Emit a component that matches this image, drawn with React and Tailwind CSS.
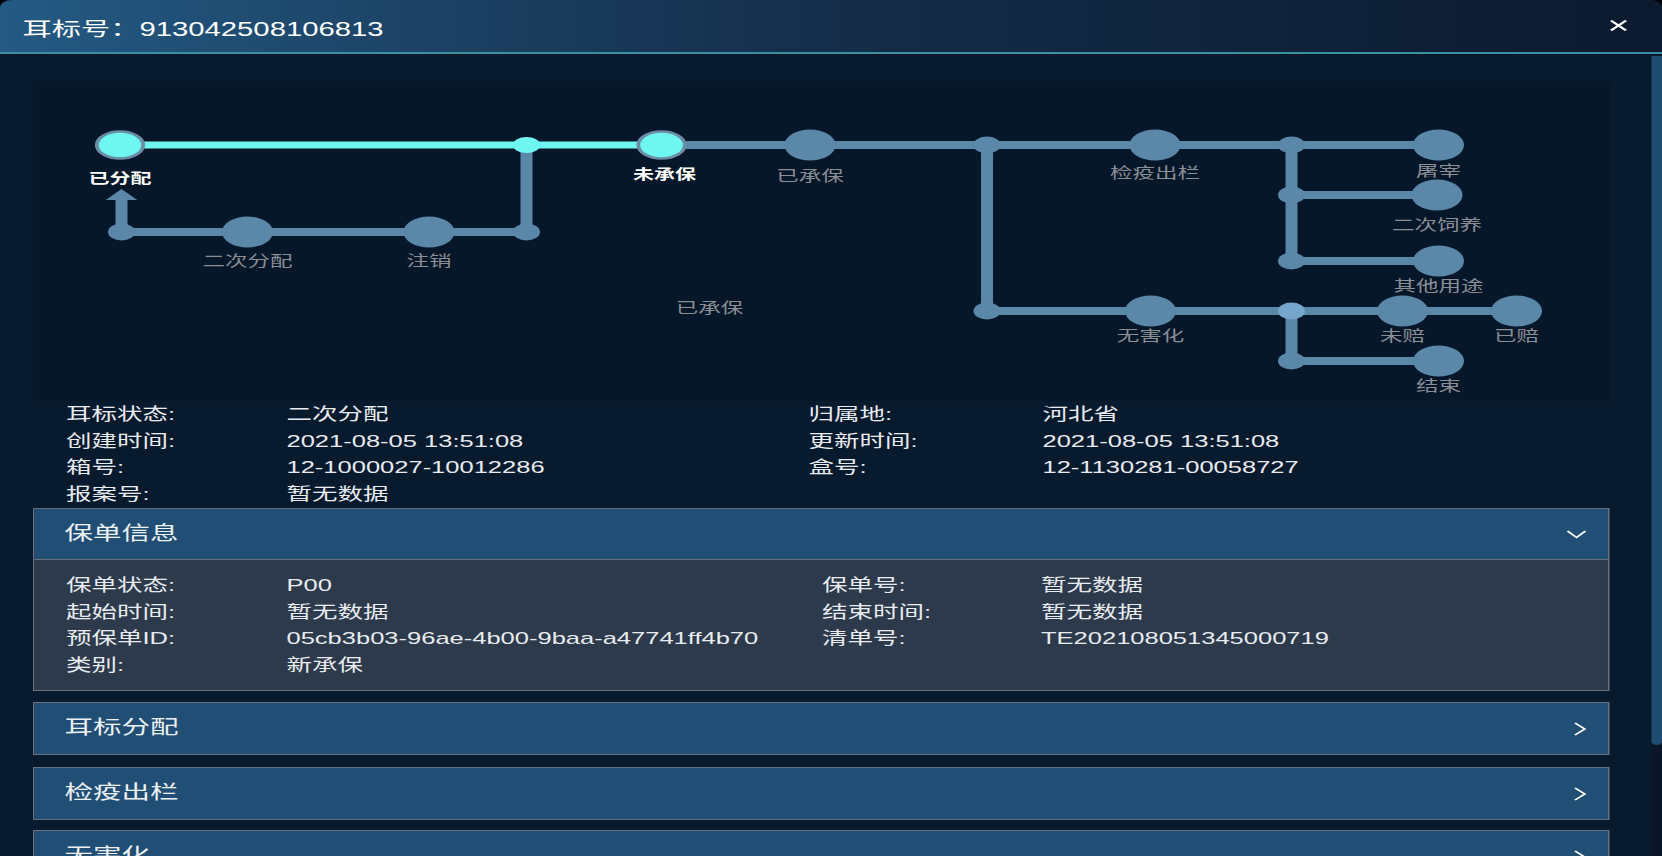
import React from 'react';

const rows = [
  ['耳标状态:', '二次分配', '归属地:', '河北省'],
  ['创建时间:', '2021-08-05 13:51:08', '更新时间:', '2021-08-05 13:51:08'],
  ['箱号:', '12-1000027-10012286', '盒号:', '12-1130281-00058727'],
  ['报案号:', '暂无数据', '', ''],
];

const policy = [
  ['保单状态:', 'P00', '保单号:', '暂无数据'],
  ['起始时间:', '暂无数据', '结束时间:', '暂无数据'],
  ['预保单ID:', '05cb3b03-96ae-4b00-9baa-a47741ff4b70', '清单号:', 'TE202108051345000719'],
  ['类别:', '新承保', '', ''],
];

const GRAY = '#5b87a8';
const CYAN = '#6ef6f1';

const nodes = [
  [518, 64], [748, 64], [937, 64], [936, 114], [937, 180],
  [143, 151], [264, 151], [745, 230], [913, 230], [989, 230], [937, 280],
];
const joints = [[329, 151], [59, 151], [636, 64], [636, 230], [839, 64], [839, 114], [839, 180], [839, 230], [839, 280]];
const labels = [
  ['已承保', 518, 95], ['检疫出栏', 748, 92], ['屠宰', 937, 90], ['二次饲养', 936, 144],
  ['其他用途', 937, 205], ['二次分配', 143, 180], ['注销', 264, 180], ['无害化', 745, 255],
  ['未赔', 913, 255], ['已赔', 989, 255], ['结束', 937, 305], ['已承保', 451, 227],
];

function FlowChart() {
  return (
    <svg viewBox="0 0 1051 320" className="w-full h-full">
      <g stroke={GRAY} strokeWidth="8" fill="none">
        <path d="M419 64H937" />
        <path d="M839 64V180M839 114H936M839 180H937" />
        <path d="M636 64V230M635 230H989" />
        <path d="M839 230V280M839 280H937" />
        <path d="M329 64V151M59 151H329" />
        <path d="M59 151V118" />
      </g>
      <polygon points="48.5,119 69.5,119 59,108" fill={GRAY} />
      <path d="M58 64H419" stroke={CYAN} strokeWidth="7" />
      {nodes.map(([x, y], i) => (
        <ellipse key={i} cx={x} cy={y} rx="17" ry="15.5" fill={GRAY} />
      ))}
      {joints.map(([x, y], i) => (
        <ellipse key={i} cx={x} cy={y} rx="9" ry="8.5" fill={i === 7 ? '#76a6cb' : GRAY} />
      ))}
      <ellipse cx="329" cy="64" rx="9" ry="8" fill={CYAN} />
      <ellipse cx="58" cy="64" rx="15.5" ry="13.5" fill={CYAN} stroke="#6d8ca5" strokeWidth="2.5" />
      <ellipse cx="419" cy="64" rx="15.5" ry="13.5" fill={CYAN} stroke="#6d8ca5" strokeWidth="2.5" />
      <g fill="#ffffff" fontSize="14" fontWeight="700" textAnchor="middle" dominantBaseline="central">
        <text x="58" y="97">已分配</text>
        <text x="421" y="93">未承保</text>
      </g>
      <g fill="#8a8e95" fontSize="15" textAnchor="middle" dominantBaseline="central">
        {labels.map(([t, x, y], i) => (
          <text key={i} x={x} y={y}>{t}</text>
        ))}
      </g>
    </svg>
  );
}

function Chevron({ open }) {
  return open ? (
    <svg width="14" height="9" viewBox="0 0 14 9" fill="none" stroke="#ffffff" strokeWidth="1.5">
      <polyline points="1,1 7,7.5 13,1" />
    </svg>
  ) : (
    <svg width="9" height="14" viewBox="0 0 9 14" fill="none" stroke="#ffffff" strokeWidth="1.5">
      <polyline points="1,1 7.5,7 1,13" />
    </svg>
  );
}

function Panel({ title, open, children }) {
  return (
    <div className="border border-[#66717d]">
      <div className={`h-[51px] flex items-center justify-between pl-[20px] pr-[14px] bg-[#214e74] ${open ? 'border-b border-[#66717d]' : ''}`}>
        <span className="text-[19px] text-[#eef1f4]">{title}</span>
        <Chevron open={open} />
      </div>
      {children}
    </div>
  );
}

export default function App() {
  return (
    <div className="w-[1662px] h-[856px] overflow-hidden bg-black">
      <div className="w-[1108px] h-[856px] origin-top-left scale-x-150 flex flex-col rounded-t-lg overflow-hidden bg-[#071a2e] font-['Liberation_Sans','Noto_Sans_CJK_SC',sans-serif]">
        <div className="h-[54px] shrink-0 flex justify-between pl-[15px] pr-[23px] border-b-2 border-[#3b8fa3] bg-linear-to-r from-[#245a83] via-[#142d4a] to-[#0b1a2e]">
          <h1 className="pt-[16px] text-[19.5px] leading-[26px] text-white">耳标号：913042508106813</h1>
          <svg className="mt-[20px]" width="12" height="11" viewBox="0 0 12 11" stroke="#ffffff" strokeWidth="1.8">
            <path d="M1 0.5L11 10.5M11 0.5L1 10.5" />
          </svg>
        </div>

        <div className="flex-1 flex min-h-0">
          <div className="flex-1 pl-[22px] pr-[28px] pt-[27px] overflow-hidden">
            <div className="h-[320px] bg-[#06172a]">
              <FlowChart />
            </div>

            <div className="grid grid-cols-[147px_348px_156px_1fr] pl-[22px] pt-px text-[17px] leading-[26.5px] text-[#e8ebef]">
              {rows.map((r) => r.map((c, j) => <div key={r[0] + j}>{c}</div>))}
            </div>

            <div>
              <Panel title="保单信息" open>
                <div className="bg-[#2d3a4b] pt-[13px] pb-[11px] pl-[21px] grid grid-cols-[147px_357px_146px_1fr] text-[17px] leading-[26.5px] text-[#e8ebef]">
                  {policy.map((r) => r.map((c, j) => <div key={r[0] + j}>{c}</div>))}
                </div>
              </Panel>
            </div>

            <div className="mt-[11px]">
              <Panel title="耳标分配" />
            </div>
            <div className="mt-[12px]">
              <Panel title="检疫出栏" />
            </div>
            <div className="mt-[10px]">
              <Panel title="无害化" />
            </div>
          </div>

          <div className="w-[7px] shrink-0 bg-[#0a1628]">
            <div className="mt-[2px] h-[689px] rounded-b-full bg-[#1f4d72]" />
          </div>
        </div>
      </div>
    </div>
  );
}
